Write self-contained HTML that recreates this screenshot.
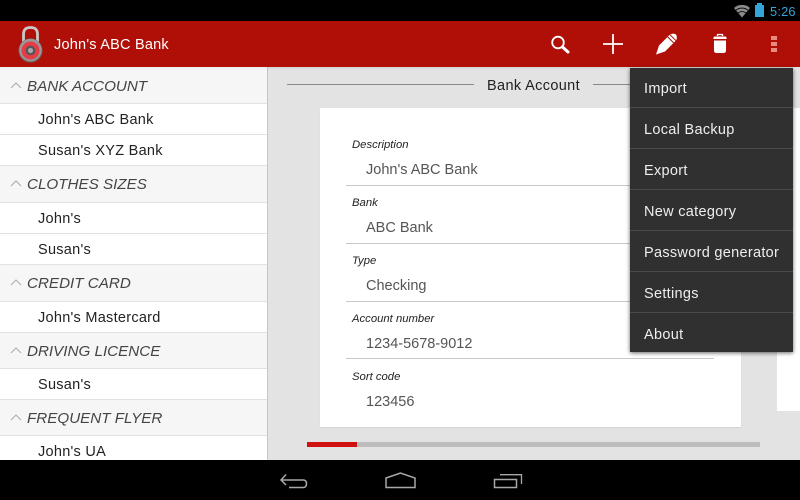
<!DOCTYPE html>
<html><head><meta charset="utf-8"><style>
html,body{margin:0;padding:0;width:800px;height:500px;overflow:hidden;background:#e3e3e3}
body{position:relative;font-family:"Liberation Sans",sans-serif}
.a{position:absolute}
.t{position:absolute;white-space:nowrap;line-height:18px}
.hd{position:absolute;left:0;width:267px;background:#f6f6f6;border-bottom:1px solid #e2e2e2}
.hd span{position:absolute;left:27px;top:50%;margin-top:-9px;line-height:20px;font-size:15.2px;font-style:italic;color:#444;white-space:nowrap}
.hd svg{position:absolute;left:10px;top:50%;margin-top:-6px}
.it{position:absolute;left:0;width:267px;background:#fff;border-bottom:1px solid #e2e2e2}
.it span{position:absolute;left:38px;top:50%;margin-top:-8px;line-height:18px;font-size:14.5px;letter-spacing:.27px;color:#222;white-space:nowrap}
.lb{position:absolute;left:352px;font-size:11.3px;font-style:italic;color:#222;line-height:14px;white-space:nowrap}
.vl{position:absolute;left:366px;font-size:14.5px;color:#555;line-height:18px;white-space:nowrap}
.ln{position:absolute;left:346px;width:368px;height:1px;background:#c8c8c8}
.m{position:absolute;left:14px;font-size:14.5px;letter-spacing:.3px;color:#eee;line-height:18px;white-space:nowrap}
.d{position:absolute;left:0;width:163px;height:1px;background:#4a4a4a}
</style></head><body>
<div class="a" style="left:0;top:0;width:800px;height:21px;background:#000"></div>
<svg class="a" style="left:733px;top:3px" width="18" height="15" viewBox="0 0 18 15"><path d="M1 5C5.500 .8 12.500 .8 17 5L9 14.500Z" fill="#8c8c8c"/><path d="M3 7.200C6.500 4.400 11.500 4.400 15 7.200M5.200 9.800C7.500 8.100 10.500 8.100 12.800 9.800" fill="none" stroke="#000" stroke-width=".9"/></svg>
<div class="a" style="left:755px;top:5px;width:9px;height:12px;background:#33a5d8"></div>
<div class="a" style="left:757px;top:3px;width:5px;height:2px;background:#33a5d8"></div>
<div class="t" style="left:770px;top:3px;font-size:12.8px;color:#33a5d8;letter-spacing:.2px">5:26</div>

<div class="a" style="left:0;top:21px;width:800px;height:46px;background:#b00f08"></div>
<svg class="a" style="left:16px;top:24px" width="30" height="39" viewBox="0 0 30 39">
<path d="M7.500 18V10.500C7.500 5 10.500 3.500 14.500 3.500S21.500 5 21.500 10.500V18" fill="none" stroke="#c8c8c8" stroke-width="2.800"/>
<circle cx="14.500" cy="26.500" r="12" fill="#6a6a6a"/><circle cx="14.500" cy="26" r="11.200" fill="#999"/>
<circle cx="14.500" cy="26.500" r="9" fill="#e63c48"/><circle cx="14.500" cy="26.500" r="4.800" fill="#555"/><circle cx="14.500" cy="26.500" r="2.600" fill="#a8a8a8"/></svg>
<div class="t" style="left:54px;top:36px;font-size:14.5px;letter-spacing:.22px;color:#fff">John's ABC Bank</div>

<svg class="a" style="left:549px;top:33px" width="22" height="22" viewBox="0 0 22 22"><circle cx="9" cy="9.500" r="5.800" fill="none" stroke="#fff" stroke-width="1.800"/><path d="M13.500 14L19 19" stroke="#fff" stroke-width="3" stroke-linecap="round"/></svg>
<svg class="a" style="left:602px;top:33px" width="22" height="22" viewBox="0 0 22 22"><path d="M1 11H21M11 1V21" stroke="#fff" stroke-width="1.800"/></svg>
<svg class="a" style="left:655px;top:32px" width="24" height="24" viewBox="0 0 24 24"><path d="M1 22.500L4 13.500L14.500 3Q18 .5 21 2.500Q23 6 20.500 9L10 19.500Z" fill="#fff"/><path d="M12.800 5L18.800 11M15.300 3L21 8.700" stroke="#b00f08" stroke-width="1"/></svg>
<svg class="a" style="left:712px;top:33px" width="16" height="22" viewBox="0 0 16 22"><path d="M5.500 3V1.500H10.500V3" fill="none" stroke="#fff" stroke-width="1.300"/><path d="M1.500 6V5Q1.500 3.500 3 3.500H13Q14.500 3.500 14.500 5V6Z" fill="#fff"/><path d="M2 7.500H14V17.500Q14 20 11.500 20H4.500Q2 20 2 17.500Z" fill="#fff"/></svg>
<div class="a" style="left:771px;top:36px;width:6px;height:4px;background:#e98a80"></div>
<div class="a" style="left:771px;top:42px;width:6px;height:4px;background:#e98a80"></div>
<div class="a" style="left:771px;top:48px;width:6px;height:4px;background:#e98a80"></div>

<div class="a" style="left:0;top:67px;width:268px;height:393px;background:#fff;overflow:hidden">
<div class="hd" style="top:1px;height:35px"><svg width="12" height="10"><path d="M1 8L6 3L11 8" fill="none" stroke="#aaa"/></svg><span>BANK ACCOUNT</span></div>
<div class="it" style="top:37px;height:30px"><span>John's ABC Bank</span></div>
<div class="it" style="top:68px;height:30px"><span>Susan's XYZ Bank</span></div>
<div class="hd" style="top:99px;height:36px"><svg width="12" height="10"><path d="M1 8L6 3L11 8" fill="none" stroke="#aaa"/></svg><span>CLOTHES SIZES</span></div>
<div class="it" style="top:136px;height:30px"><span>John's</span></div>
<div class="it" style="top:167px;height:30px"><span>Susan's</span></div>
<div class="hd" style="top:198px;height:36px"><svg width="12" height="10"><path d="M1 8L6 3L11 8" fill="none" stroke="#aaa"/></svg><span>CREDIT CARD</span></div>
<div class="it" style="top:235px;height:30px"><span>John's Mastercard</span></div>
<div class="hd" style="top:266px;height:35px"><svg width="12" height="10"><path d="M1 8L6 3L11 8" fill="none" stroke="#aaa"/></svg><span>DRIVING LICENCE</span></div>
<div class="it" style="top:302px;height:30px"><span>Susan's</span></div>
<div class="hd" style="top:333px;height:35px"><svg width="12" height="10"><path d="M1 8L6 3L11 8" fill="none" stroke="#aaa"/></svg><span>FREQUENT FLYER</span></div>
<div class="it" style="top:369px;height:30px"><span>John's UA</span></div>
</div>
<div class="a" style="left:267px;top:67px;width:1px;height:393px;background:#c6c6c6"></div>
<div class="a" style="left:0;top:67px;width:630px;height:3px;background:linear-gradient(rgba(0,0,0,.07),rgba(0,0,0,0))"></div>

<div class="a" style="left:287px;top:84px;width:187px;height:1px;background:#8a8a8a"></div>
<div class="a" style="left:593px;top:84px;width:40px;height:1px;background:#8a8a8a"></div>
<div class="t" style="left:487px;top:77px;font-size:14.5px;letter-spacing:.36px;color:#222">Bank Account</div>

<div class="a" style="left:320px;top:108px;width:421px;height:319px;background:#fff;box-shadow:0 1px 1px #d2d2d2"></div>
<div class="a" style="left:777px;top:108px;width:23px;height:303px;background:#fff"></div>

<div class="lb" style="top:138px">Description</div><div class="vl" style="top:161px">John's ABC Bank</div><div class="ln" style="top:185px"></div>
<div class="lb" style="top:196px">Bank</div><div class="vl" style="top:219px">ABC Bank</div><div class="ln" style="top:243px"></div>
<div class="lb" style="top:254px">Type</div><div class="vl" style="top:277px">Checking</div><div class="ln" style="top:301px"></div>
<div class="lb" style="top:312px">Account number</div><div class="vl" style="top:335px">1234-5678-9012</div><div class="ln" style="top:358px"></div>
<div class="lb" style="top:370px">Sort code</div><div class="vl" style="top:393px">123456</div>

<div class="a" style="left:307px;top:442px;width:453px;height:5px;background:#bdbdbd"></div>
<div class="a" style="left:307px;top:442px;width:50px;height:5px;background:#d11010"></div>

<div class="a" style="left:630px;top:68px;width:163px;height:284px;background:#303030;box-shadow:0 1px 4px rgba(0,0,0,.6)">
<div class="m" style="top:12px">Import</div><div class="d" style="top:39px"></div>
<div class="m" style="top:53px">Local Backup</div><div class="d" style="top:80px"></div>
<div class="m" style="top:94px">Export</div><div class="d" style="top:121px"></div>
<div class="m" style="top:135px">New category</div><div class="d" style="top:162px"></div>
<div class="m" style="top:176px">Password generator</div><div class="d" style="top:203px"></div>
<div class="m" style="top:217px">Settings</div><div class="d" style="top:244px"></div>
<div class="m" style="top:258px">About</div>
</div>

<div class="a" style="left:0;top:460px;width:800px;height:40px;background:#000"></div>
<svg class="a" style="left:278px;top:470px" width="32" height="22" viewBox="0 0 32 22"><path d="M8 4.500L3 10L8 15M3 10H25Q28.500 10 28.500 13.700T25 17.500H11" fill="none" stroke="#a8a8a8" stroke-width="1.500"/></svg>
<svg class="a" style="left:383px;top:470px" width="34" height="20" viewBox="0 0 34 20"><path d="M3 8L17.500 3L32 8V17.500H3Z" fill="none" stroke="#a8a8a8" stroke-width="1.500"/></svg>
<svg class="a" style="left:492px;top:470px" width="32" height="20" viewBox="0 0 32 20"><path d="M2.500 9.500H24.500V17.500H2.500Z" fill="none" stroke="#a8a8a8" stroke-width="1.500"/><path d="M8 4.700H29.500V14" fill="none" stroke="#a8a8a8" stroke-width="1.300"/></svg>
</body></html>
